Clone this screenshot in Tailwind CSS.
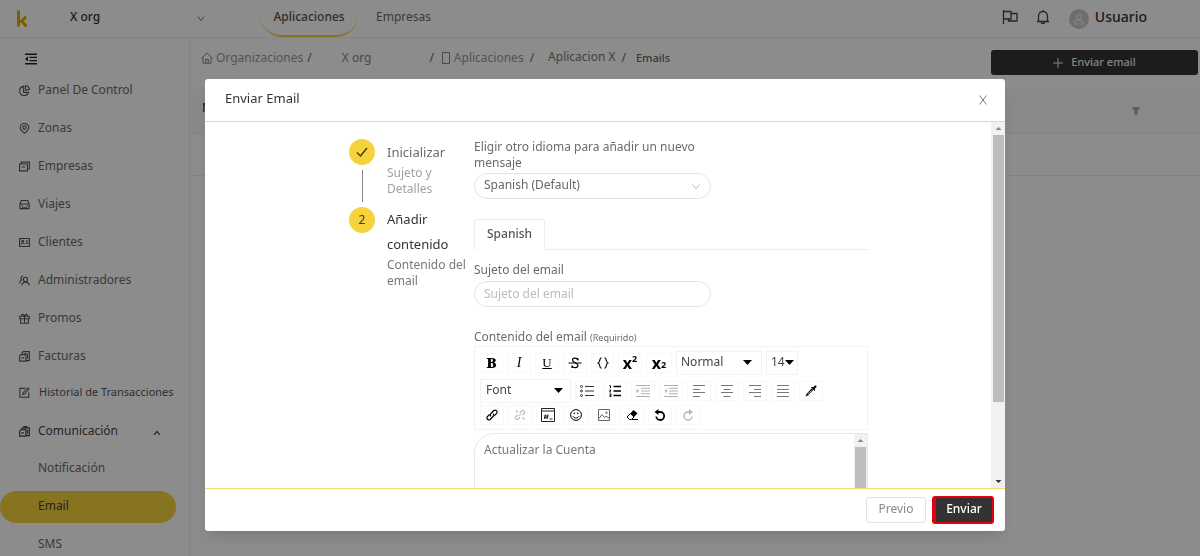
<!DOCTYPE html>
<html lang="es">
<head>
  <meta charset="UTF-8" />
  <meta name="viewport" content="width=device-width, initial-scale=1.0" />
  <title>Enviar Email</title>
  <script src="https://cdn.jsdelivr.net/npm/@tailwindcss/browser@4"></script>
</head>
<body class="h-screen overflow-hidden bg-white font-['Noto_Sans',sans-serif] text-xs text-[#6b6b6b]">

  <!-- Page behind the dialog -->
  <div class="flex h-full flex-col">
    <header class="flex h-[38px] shrink-0 items-center border-b border-[#efefef]">
      <svg class="ml-4 h-[18px] w-3 shrink-0" viewBox="0 0 12 18"><path d="M2.500 .5v16M2.500 11.500h3L10 6.500M5.500 11l5 5.500" fill="none" stroke="#e8ac00" stroke-width="3"/></svg>
      <div class="relative ml-[42px] w-[136px] shrink-0">
        <select aria-label="Organización" class="w-full appearance-none bg-transparent pb-1 text-xs font-medium text-[#333]"><option>X org</option></select>
        <svg class="pointer-events-none absolute top-1.5 right-0 h-2 w-2.5" viewBox="0 0 10 8"><path d="M2 1.500 5 5.500l3-4" fill="none" stroke="#777"/></svg>
      </div>
      <nav class="ml-[54px] flex h-full">
        <a href="#" class="flex w-[98px] items-center justify-center rounded-b-[22px] border-b-2 border-[#f5d33c] pb-0.5 font-medium text-[#555]">Aplicaciones</a>
        <a href="#" class="flex items-center px-[18px] pb-1">Empresas</a>
      </nav>
      <div class="mr-[53px] ml-auto flex items-center">
        <button aria-label="Idioma" class="mr-[17px] mb-1"><svg class="h-4 w-4" viewBox="0 0 16 16" fill="none" stroke="#444" stroke-width="1.300"><path d="M1.500 1v14M1.500 2.500h7.500v7.500H1.500M9 4.500h6v7.500H6.500V10"/></svg></button>
        <button aria-label="Avisos" class="mr-[18px] mb-1"><svg class="h-4 w-4" viewBox="0 0 16 16" fill="none" stroke="#444" stroke-width="1.300"><path d="M3.500 12.500V7a4.500 4.500 0 0 1 9 0v5.500M2 12.500h12M8 2.500V1M6.300 13a1.700 1.700 0 0 0 3.400 0"/></svg></button>
        <svg class="mr-1.5 h-5 w-5" viewBox="0 0 20 20"><circle cx="10" cy="10" r="10" fill="#c8c8c8"/><circle cx="10" cy="8" r="2.500" fill="none" stroke="#eee" stroke-width="1.200"/><path d="M5.500 15c.5-5.500 8.500-5.500 9 0z" fill="none" stroke="#eee" stroke-width="1.200"/></svg>
        <span class="pb-1 text-sm font-medium text-[#333]">Usuario</span>
      </div>
    </header>

    <div class="flex min-h-0 flex-1">
      <aside class="w-[190px] shrink-0 border-r border-[#efefef]">
        <button aria-label="Plegar menú" class="mt-[15px] mb-1.5 ml-[25px] block h-3 w-3"><svg class="h-3 w-3" viewBox="0 0 12 12"><path d="M0 1.200h12M4.500 4.400H12M4.500 7.600H12M0 10.800h12" stroke="#222" stroke-width="1.400"/><path d="M3 3.500v5L0 6z" fill="#222"/></svg></button>
        <nav>
          <a href="#" class="flex h-[38px] items-center pl-[19px]">
            <svg class="mr-2 h-[11px] w-[11px]" viewBox="0 0 12 12" fill="none" stroke="#555" stroke-width="1.200"><path d="M5 1.500a5 5 0 1 0 5.500 6.500H5z"/><path d="M7 .8v4.700l4.500-.8A5 5 0 0 0 7 .8z"/></svg>Panel De Control</a>
          <a href="#" class="flex h-[38px] items-center pl-[19px]">
            <svg class="mr-2 h-[11px] w-[11px]" viewBox="0 0 12 12" fill="none" stroke="#555" stroke-width="1.200"><path d="M6 11.300C3 9 1.300 7.300 1.300 5a4.700 4.400 0 0 1 9.400 0c0 2.300-1.700 4-4.700 6.300z"/><circle cx="6" cy="5" r="1.900"/></svg>Zonas</a>
          <a href="#" class="flex h-[38px] items-center pl-[19px]">
            <svg class="mr-2 h-[11px] w-[11px]" viewBox="0 0 12 12" fill="none" stroke="#555" stroke-width="1.200"><path d="M.6 3.200h8.600v7.600H.6zM2.400 3V1.200h9v7.600H9.500M2.800 6.500h4"/></svg>Empresas</a>
          <a href="#" class="flex h-[38px] items-center pl-[19px]">
            <svg class="mr-2 h-[11px] w-[11px]" viewBox="0 0 12 12" fill="none" stroke="#555" stroke-width="1.200"><path d="M1 5.500 2.500 1.600h7L11 5.500v5H1zM1 5.500h10M2.500 7.700h1.500M8 7.700h1.500M3.500 9.500h5"/></svg>Viajes</a>
          <a href="#" class="flex h-[38px] items-center pl-[19px]">
            <svg class="mr-2 h-[11px] w-[11px]" viewBox="0 0 12 12" fill="none" stroke="#555" stroke-width="1.200"><path d="M.6 1.600h10.800v8.800H.6zM7.500 4.500H10M7.500 7H10M2.300 8c.3-2.200 3.200-2.200 3.500 0"/><circle cx="4" cy="4.600" r=".9"/></svg>Clientes</a>
          <a href="#" class="flex h-[38px] items-center pl-[19px]">
            <svg class="mr-2 h-[11px] w-[11px]" viewBox="0 0 12 12" fill="none" stroke="#555" stroke-width="1.200"><circle cx="7" cy="4.800" r="2.300"/><path d="M3 11.500c.4-5 7.800-5 8.300 0M4.500 1.200a2.300 2.300 0 0 0-1.700 4C1.500 6 .8 7 .7 9"/></svg>Administradores</a>
          <a href="#" class="flex h-[38px] items-center pl-[19px]">
            <svg class="mr-2 h-[11px] w-[11px]" viewBox="0 0 12 12" fill="none" stroke="#555" stroke-width="1.200"><path d="M.8 3.500h10.400v2.700H.8zM1.700 6.200v5h8.600v-5M6 3.500v7.700M6 3.500C4.500 0 2 1.500 3.500 3.500M6 3.500C7.500 0 10 1.500 8.500 3.500"/></svg>Promos</a>
          <a href="#" class="flex h-[38px] items-center pl-[19px]">
            <svg class="mr-2 h-[11px] w-[11px]" viewBox="0 0 12 12" fill="none" stroke="#555" stroke-width="1.200"><path d="M3.500 4V1.500L5 .7h6.300v9.800H8M.7 5.500 2 4h5.500v7H.7zM2.500 7.500h3M9.300 3v5.500M6 2.700h2"/></svg>Facturas</a>
          <a href="#" class="flex h-[38px] items-center pb-1 pl-[19px] text-[11px] text-[#555]">
            <svg class="mr-[9px] h-[11px] w-[11px]" viewBox="0 0 12 12" fill="none" stroke="#555" stroke-width="1.200"><path d="M7 1.500H1v9.700h9.700V6M4 8.200l.4-2L9.500 1l1.400 1.300L6 7.700z"/></svg>Historial de Transacciones</a>
          <a href="#" class="flex h-[38px] items-center pr-7 pb-0.5 pl-[19px] text-[#444]">
            <svg class="mr-2 h-[11px] w-[11px]" viewBox="0 0 12 12" fill="none" stroke="#444" stroke-width="1.300"><path d="M3.500 4V2h7.800v8.500H8M.7 5.500 2 4h5.500v7H.7zM2.500 7.500h3M9.300 4v4.500M5.500 1.800V.6h3v1.200"/></svg>Comunicación
            <svg class="mt-1 ml-auto h-1.5 w-2" viewBox="0 0 8 6"><path d="M1 4.800 4 1.500l3 3.300" fill="none" stroke="#444" stroke-width="1.200"/></svg></a>
          <a href="#" class="flex h-[34px] items-center pl-[38px]">Notificación</a>
          <a href="#" class="mt-1.5 mr-[13px] mb-0.5 flex h-[32px] items-center rounded-full bg-[#f5d33c] pb-0.5 pl-[38px] text-[#444]">Email</a>
          <a href="#" class="flex h-[37px] items-center pl-[38px]">SMS</a>
        </nav>
      </aside>

      <main class="min-w-0 flex-1">
        <div class="flex h-[51px] items-start pt-3 pr-0.5 pl-[11px]">
          <nav class="-mt-px flex items-center text-[#999]">
            <svg class="mr-[3px] h-3 w-3" viewBox="0 0 12 12" fill="none" stroke="#888"><path d="M.5 6.500 6 1l5.500 5.500M2 5.500v5.700h8V5.500M4.700 11V7.500h2.600V11"/></svg>
            <a href="#">Organizaciones</a>
            <span class="ml-1 text-[#666]">/</span>
            <a href="#" class="ml-[30px] text-[#888]">X org</a>
            <span class="ml-[58px] text-[#666]">/</span>
            <svg class="mr-1 ml-2 h-3 w-2" viewBox="0 0 8 12"><path d="M.5.5h7v11h-7z" fill="none" stroke="#888"/></svg>
            <a href="#">Aplicaciones</a>
            <span class="ml-1.5 text-[#666]">/</span>
            <a href="#" class="ml-3.5 pb-0.5 text-[#777]">Aplicacion X</a>
            <span class="ml-1.5 text-[#666]">/</span>
            <span class="ml-2.5 text-[11px] font-medium text-[#666]">Emails</span>
          </nav>
          <button class="ml-auto flex h-[25px] w-[207px] items-center justify-center rounded-[3px] bg-[#333] text-[11px] font-medium text-[#eee]">
            <svg class="mr-2 h-2.5 w-2.5" viewBox="0 0 10 10"><path d="M5 0v10M0 5h10" stroke="#eee"/></svg>Enviar email</button>
        </div>
        <table class="w-full">
          <thead>
            <tr class="h-[44px] border-b border-[#eee] bg-[#fafafa]">
              <th class="pb-1.5 pl-3 text-left font-medium text-[#333]">N</th>
              <th class="w-[69px] text-left"><button aria-label="Filtrar"><svg class="h-2 w-2.5" viewBox="0 0 10 8"><path d="M.5 0h9L6.500 4v4h-3V4z" fill="#aaa"/></svg></button></th>
            </tr>
          </thead>
          <tbody><tr class="h-[42px] border-b border-[#eee]"><td></td><td></td></tr></tbody>
        </table>
      </main>
    </div>
  </div>

  <!-- Dialog -->
  <div class="fixed inset-0 flex flex-col bg-black/45 pt-[79px] pb-[25px] pl-[10px]">
    <section role="dialog" aria-labelledby="dialogTitle" class="mx-auto flex min-h-0 w-full max-w-[800px] flex-1 flex-col rounded-[3px] bg-white shadow-lg">
      <header class="flex h-[43px] shrink-0 items-center justify-between border-b border-[#f7d976] pr-[18px] pl-5">
        <h1 id="dialogTitle" class="pb-0.5 text-[13px] text-[#333]">Enviar Email</h1>
        <button aria-label="Cerrar"><svg class="h-2.5 w-2" viewBox="0 0 8 10"><path d="M.5.5l7 9M7.500.5l-7 9" stroke="#777"/></svg></button>
      </header>

      <div class="flex min-h-0 flex-1">
        <div class="min-w-0 flex-1 overflow-hidden">
          <div class="flex pl-[144px]">
            <!-- Steps -->
            <ol class="w-[125px] shrink-0 pt-[17px]">
              <li class="flex">
                <div class="mr-3 flex flex-col items-center">
                  <span class="flex size-[26px] items-center justify-center rounded-full bg-[#f5d33c]"><svg class="h-3 w-3" viewBox="0 0 12 12"><path d="M1 6.500 4.500 10 11 2" fill="none" stroke="#443c10" stroke-width="1.400"/></svg></span>
                  <span class="my-[5px] h-8 w-px bg-[#888]"></span>
                </div>
                <div class="pt-px">
                  <h2 class="text-[13px] leading-[25px]">Inicializar</h2>
                  <p class="text-xs leading-4 text-[#a3a3a3]">Sujeto y<br />Detalles</p>
                </div>
              </li>
              <li class="flex">
                <span class="mr-3 flex size-[26px] shrink-0 items-center justify-center rounded-full bg-[#f5d33c] text-xs text-[#443c10]">2</span>
                <div>
                  <h2 class="text-[13px] leading-[25px] text-[#333]">Añadir<br />contenido</h2>
                  <p class="text-xs leading-4 whitespace-nowrap text-[#777]">Contenido del<br />email</p>
                </div>
              </li>
            </ol>

            <!-- Form -->
            <form class="w-[394px] pt-[17px]">
              <label for="language" class="block w-[237px] text-xs leading-4">Eligir otro idioma para añadir un nuevo mensaje</label>
              <div class="relative mt-0.5 w-[237px]">
                <select id="language" class="h-[26px] w-full appearance-none rounded-full border border-[#e3e3e3] bg-white px-[9px] pb-0.5 text-xs text-[#666]"><option>Spanish (Default)</option></select>
                <svg class="pointer-events-none absolute top-2.5 right-2.5 h-2 w-2.5" viewBox="0 0 10 8"><path d="M1.500 1.500 5 6l3.500-4.500" fill="none" stroke="#bbb"/></svg>
              </div>
              <div class="mt-5 flex border-b border-[#ececec]">
                <button type="button" class="-mb-px h-[31px] rounded-t-[3px] border border-b-0 border-[#ececec] bg-white px-3 pb-0.5 text-xs font-medium text-[#555]">Spanish</button>
              </div>
              <label for="subject" class="mt-3 block text-xs leading-4">Sujeto del email</label>
              <input id="subject" type="text" placeholder="Sujeto del email" class="mt-[3px] block h-[26px] w-[237px] rounded-full border border-[#e3e3e3] px-[9px] pb-0.5 text-xs placeholder:text-[#bcbcbc]" />
              <label for="content" class="mt-[22px] block text-xs leading-4">Contenido del email <span class="text-[9px]">(Requirido)</span></label>

              <div class="border border-[#f3f3f3] pt-1 pb-0.5 pl-[5px] text-black">
                <div class="flex h-6 items-center gap-1">
                  <button type="button" aria-label="Negrita" class="flex h-5 w-[23px] items-center justify-center border border-[#f8f8f8] font-['Noto_Serif','Liberation_Serif',serif] text-sm font-black">B</button>
                  <button type="button" aria-label="Cursiva" class="flex h-5 w-[24px] items-center justify-center border border-[#f8f8f8] font-['Liberation_Serif',serif] text-sm italic">I</button>
                  <button type="button" aria-label="Subrayado" class="flex h-5 w-[24px] items-center justify-center border border-[#f8f8f8] font-['Liberation_Serif',serif] text-[13px] underline">U</button>
                  <button type="button" aria-label="Tachado" class="flex h-5 w-[24px] items-center justify-center border border-[#f8f8f8]"><svg class="h-3 w-3.5" viewBox="0 0 14 12" fill="none" stroke="#000"><path d="M10 3.500V1.200M10 3C9 .5 4.500.5 4.500 3c0 3 5.500 2.500 5.500 5.500 0 2.500-4.500 2.800-6 .5M4 11V8.500" stroke-width="1.200"/><path d="M.5 6h13"/></svg></button>
                  <button type="button" aria-label="Código" class="flex h-5 w-[23px] items-center justify-center border border-[#f8f8f8]"><svg class="h-3 w-3" viewBox="0 0 12 12" fill="none" stroke="#111" stroke-width="1.200"><path d="M4.500.8C2 .5 3.500 5.200 1.200 6 3.500 6.800 2 11.500 4.500 11.200M7.500.8C10 .5 8.500 5.200 10.800 6 8.500 6.800 10 11.500 7.500 11.200"/></svg></button>
                  <button type="button" aria-label="Superíndice" class="flex h-5 w-[24px] items-center justify-center border border-[#f8f8f8] text-base font-bold">x<sup class="-top-1 text-[9px]">2</sup></button>
                  <button type="button" aria-label="Subíndice" class="flex h-5 w-[26px] items-center justify-center border border-[#f8f8f8] text-base font-bold">x<sub class="text-[9px]">2</sub></button>
                  <div class="relative">
                    <select aria-label="Bloque" class="h-6 w-[86px] appearance-none border border-[#f3f3f3] px-1 pb-0.5 text-xs text-[#444]"><option>Normal</option></select>
                    <svg class="pointer-events-none absolute top-[9px] right-2.5 h-[5px] w-[9px]" viewBox="0 0 9 5"><path d="M0 0h9L4.500 5z"/></svg>
                  </div>
                  <div class="relative">
                    <select aria-label="Tamaño" class="h-6 w-[32px] appearance-none border border-[#f3f3f3] px-1 pb-0.5 text-xs text-[#444]"><option>14</option></select>
                    <svg class="pointer-events-none absolute top-[9px] right-1 h-[5px] w-[9px]" viewBox="0 0 9 5"><path d="M0 0h9L4.500 5z"/></svg>
                  </div>
                </div>
                <div class="mt-1 flex h-6 items-center gap-1">
                  <div class="relative">
                    <select aria-label="Fuente" class="h-6 w-[91px] appearance-none border border-[#f3f3f3] px-[5px] pb-0.5 text-xs text-[#444]"><option>Font</option></select>
                    <svg class="pointer-events-none absolute top-[9px] right-2 h-[5px] w-[9px]" viewBox="0 0 9 5"><path d="M0 0h9L4.500 5z"/></svg>
                  </div>
                  <button type="button" aria-label="Lista" class="flex h-5 w-[24px] items-center justify-center border border-[#f8f8f8]"><svg class="h-3 w-3.5" viewBox="0 0 14 12" fill="none" stroke="#333"><path d="M5 1.500h9M5 6h9M5 10.500h9"/><circle cx="1.500" cy="1.500" r="1"/><circle cx="1.500" cy="6" r="1"/><circle cx="1.500" cy="10.500" r="1"/></svg></button>
                  <button type="button" aria-label="Lista numerada" class="flex h-5 w-[24px] items-center justify-center border border-[#f8f8f8]"><svg class="h-3 w-3" viewBox="0 0 12 12" fill="none" stroke="#000"><path d="M4.500 1.500H12M4.500 6H12M4.500 10.500H12" stroke-width="1.400"/><path d="M.5.500h1v2.500M.5 5h1.500L.5 7h1.500M.5 9h1.500v2.500H.5M.5 10.200h1.500" stroke-width=".9"/></svg></button>
                  <button type="button" aria-label="Sangrar" class="flex h-5 w-[24px] items-center justify-center border border-[#f8f8f8]"><svg class="h-3 w-3.5" viewBox="0 0 14 12" stroke="#b0b0b0"><path d="M0 .5h14M5 3.250h9M5 6h9M5 8.750h9M0 11.500h14"/><path d="M.5 4v4L3 6z" fill="#b0b0b0" stroke="none"/></svg></button>
                  <button type="button" aria-label="Quitar sangría" class="flex h-5 w-[24px] items-center justify-center border border-[#f8f8f8]"><svg class="h-3 w-3.5" viewBox="0 0 14 12" stroke="#b0b0b0"><path d="M0 .5h14M5 3.250h9M5 6h9M5 8.750h9M0 11.500h14"/><path d="M3 4v4L.5 6z" fill="#b0b0b0" stroke="none"/></svg></button>
                  <button type="button" aria-label="Izquierda" class="flex h-5 w-[24px] items-center justify-center border border-[#f8f8f8]"><svg class="h-3 w-3" viewBox="0 0 12 12" stroke="#777"><path d="M0 .5h12M0 4.500h7M0 7.500h12M0 11.500h7"/></svg></button>
                  <button type="button" aria-label="Centro" class="flex h-5 w-[24px] items-center justify-center border border-[#f8f8f8]"><svg class="h-3 w-3" viewBox="0 0 12 12" stroke="#777"><path d="M0 .5h12M2.500 4.500h7M0 7.500h12M2.500 11.500h7"/></svg></button>
                  <button type="button" aria-label="Derecha" class="flex h-5 w-[24px] items-center justify-center border border-[#f8f8f8]"><svg class="h-3 w-3" viewBox="0 0 12 12" stroke="#777"><path d="M0 .5h12M5 4.500h7M0 7.500h12M5 11.500h7"/></svg></button>
                  <button type="button" aria-label="Justificar" class="flex h-5 w-[24px] items-center justify-center border border-[#f8f8f8]"><svg class="h-3 w-3" viewBox="0 0 12 12" stroke="#777"><path d="M0 .5h12M0 4.500h12M0 7.500h12M0 11.500h12"/></svg></button>
                  <button type="button" aria-label="Color" class="flex h-5 w-[24px] items-center justify-center border border-[#f8f8f8]"><svg class="h-3 w-3" viewBox="0 0 12 12"><path d="M.5 11.500 1.500 9l5-5.500L8.200 5 3 10.500z"/><path d="M3 9.200 6.500 5.500" stroke="#fff" stroke-width=".8"/><path d="M6 2.500l1-.7 1 .7L9.700.7c1.300-.8 2.400.6 1.600 1.600L9.500 4l.7 1-.7 1z"/></svg></button>
                </div>
                <div class="flex h-6 items-center gap-1">
                  <button type="button" aria-label="Enlace" class="flex h-5 w-[24px] items-center justify-center border border-[#f8f8f8]"><svg class="h-3 w-3" viewBox="0 0 12 12" fill="none" stroke="#000" stroke-width="1.200"><path d="M5 7.300a2 2 0 0 1 0-2.800L7.800 1.500a2 2 0 0 1 2.800 2.800L8.500 6.500M7 4.700a2 2 0 0 1 0 2.800l-2.800 3a2 2 0 0 1-2.800-2.800L3.500 5.500"/></svg></button>
                  <button type="button" aria-label="Quitar enlace" class="flex h-5 w-[24px] items-center justify-center border border-[#f8f8f8]"><svg class="h-3 w-3" viewBox="0 0 12 12" fill="none" stroke="#bbb" stroke-width="1.200"><path d="M6 4 8 1.700a1.900 1.900 0 0 1 2.500 2.600L8.500 6M6 8 4 10.300a1.900 1.900 0 0 1-2.500-2.600L3.500 6M2 1.500l2 2M8.500 8.500l2 2M5 6.500 7 5"/></svg></button>
                  <button type="button" aria-label="Incrustar" class="flex h-5 w-[24px] items-center justify-center border border-[#f8f8f8]"><svg class="h-3.5 w-3.5 shrink-0" viewBox="0 0 14 14" fill="none" stroke="#222"><path d="M.5.5h13v13H.5zM.5 3h13M4.500 6.500 3.500 11M7 6.500 6 11M3 8h4.500M3 9.700h4M8.500 11h3"/></svg></button>
                  <button type="button" aria-label="Emoji" class="flex h-5 w-[24px] items-center justify-center border border-[#f8f8f8]"><svg class="h-3 w-3" viewBox="0 0 12 12" fill="none" stroke="#000"><circle cx="6" cy="6" r="5.400"/><path d="M3 7.300c1 2.300 5 2.300 6 0"/><circle cx="4.200" cy="4.300" r=".4"/><circle cx="7.800" cy="4.300" r=".4"/></svg></button>
                  <button type="button" aria-label="Imagen" class="flex h-5 w-[24px] items-center justify-center border border-[#f8f8f8]"><svg class="h-3 w-3" viewBox="0 0 12 12" fill="none" stroke="#666"><path d="M.5.5h11v11H.5zM1 9.500l3-4 2.500 3L8 7l3.500 2.500"/><circle cx="8.500" cy="3.700" r=".8"/></svg></button>
                  <button type="button" aria-label="Borrar formato" class="flex h-5 w-[24px] items-center justify-center border border-[#f8f8f8]"><svg class="h-3 w-3" viewBox="0 0 12 12"><path d="M4.300 4.500 7.500 1l4 3.200L8 8z"/><path d="M4.300 4.500 1 8l2.500 2.500h2L8 8zM6 10.500h6" fill="none" stroke="#000"/></svg></button>
                  <button type="button" aria-label="Deshacer" class="flex h-5 w-[24px] items-center justify-center border border-[#f8f8f8]"><svg class="h-3 w-3" viewBox="0 0 12 12"><path d="M3 3h3.200a4 4 0 1 1-4 4.500" fill="none" stroke="#000" stroke-width="1.800"/><path d="M4.500 0v6L.5 3z"/></svg></button>
                  <button type="button" aria-label="Rehacer" class="flex h-5 w-[24px] items-center justify-center border border-[#f8f8f8]"><svg class="h-3 w-3" viewBox="0 0 12 12"><path d="M8.500 3H6a4 4 0 1 0 4 4.500" fill="none" stroke="#b5b5b5" stroke-width="1.500"/><path d="M7 0v6l4-3z" fill="#b5b5b5"/></svg></button>
                </div>
              </div>

              <div class="mt-[3px] flex h-[140px] overflow-hidden rounded-tl-[20px] border border-[#e6e6e6]">
                <textarea id="content" class="min-w-0 flex-1 resize-none overflow-hidden px-[9px] pt-2 text-xs leading-4 text-[#777]">Actualizar la Cuenta</textarea>
                <div class="flex w-[13px] flex-col items-center bg-[#f1f1f1]">
                  <svg class="my-1 h-[5px] w-[7px] shrink-0" viewBox="0 0 7 5"><path d="M.5 4h6L3.500 1z" fill="#888"/></svg>
                  <span class="w-[11px] flex-1 bg-[#bdbdbd]"></span>
                </div>
              </div>
            </form>
          </div>
        </div>

        <!-- Body scroll bar -->
        <div class="flex w-[14px] shrink-0 flex-col items-center bg-[#f1f1f1]">
          <svg class="my-1 h-[5px] w-[7px] shrink-0" viewBox="0 0 7 5"><path d="M.5 4h6L3.500 1z" fill="#888"/></svg>
          <span class="w-[11px] flex-[11] bg-[#bdbdbd]"></span>
          <span class="flex-[3]"></span>
          <svg class="my-1 h-[5px] w-[7px] shrink-0" viewBox="0 0 7 5"><path d="M.5 1h6L3.500 4z" fill="#333"/></svg>
        </div>
      </div>

      <footer class="flex h-[43px] shrink-0 items-center justify-end gap-1.5 border-t border-[#f7d976] pr-[11px]">
        <button class="h-[26px] w-[60px] rounded-[3px] border border-[#e3e3e3] pb-0.5 text-xs text-[#888]">Previo</button>
        <button class="h-[28px] w-[62px] rounded-[3px] border-2 border-l-4 border-[#e3000f] bg-[#333] pb-0.5 text-xs font-medium text-white">Enviar</button>
      </footer>
    </section>
  </div>
</body>
</html>
